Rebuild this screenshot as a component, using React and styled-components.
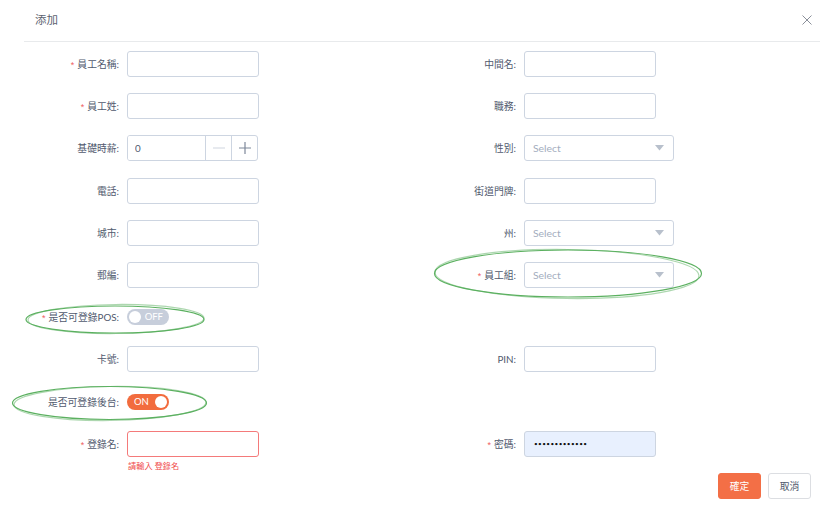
import React from "react";
import styled, { createGlobalStyle } from "styled-components";

const Global = createGlobalStyle`
  html, body { margin: 0; padding: 0; background: #fff; }
  body {
    font-family: Lato, "Noto Sans CJK TC", "Noto Sans CJK SC", sans-serif;
    color: #515a6e;
    overflow: hidden;
  }
  * { box-sizing: border-box; }
`;

const Page = styled.div`
  position: relative;
  width: 820px;
  height: 511px;
  padding-left: 24px;
`;

const Dialog = styled.div`
  width: 796px;
`;

const Header = styled.div`
  height: 42px;
  border-bottom: 1px solid #e8eaec;
  display: flex;
  align-items: center;
  justify-content: space-between;
  padding: 0 6px 0 11px;
`;

const Title = styled.div`
  font-size: 11.5px;
  color: #5c6270;
  line-height: 1;
  margin-top: -2px;
`;

const Close = styled.button`
  border: 0;
  background: none;
  padding: 0;
  width: 14px;
  height: 14px;
  display: flex;
  align-items: center;
  justify-content: center;
  margin-top: -2px;
`;

const Form = styled.div`
  display: grid;
  grid-template-columns: 397px 1fr;
  grid-auto-rows: 26px;
  row-gap: 16.2px;
  padding-top: 9px;
`;

const Item = styled.div`
  display: flex;
  align-items: center;
`;

const Label = styled.label`
  width: 103px;
  flex: none;
  padding-right: 8px;
  text-align: right;
  font-size: 9.8px;
  color: #515a6e;
  white-space: nowrap;
`;

const Star = styled.span`
  color: #f06060;
  font-size: 9px;
  margin-right: 3px;
  font-family: "Liberation Sans", sans-serif;
`;

const Control = styled.div`
  position: relative;
  display: flex;
  align-items: center;
`;

const TextInput = styled.input`
  width: ${(p) => p.$w || 132}px;
  height: 26px;
  border: 1px solid ${(p) => (p.$error ? "#f47a7a" : "#cdd5e1")};
  border-radius: 3px;
  background: ${(p) => (p.$filled ? "#e8f0fe" : "#fff")};
  padding: 0 8px;
  font-size: 9.8px;
  color: #222;
  outline: none;
  font-family: Lato, "Noto Sans CJK TC", sans-serif;
`;

const PasswordInput = styled(TextInput)`
  font-size: 6.4px;
  letter-spacing: 0.4px;
  padding-left: 9px;
  color: #111;
`;

const NumberBox = styled.div`
  width: 131px;
  height: 26px;
  border: 1px solid #cdd5e1;
  border-radius: 3px;
  display: flex;
  overflow: hidden;
`;

const NumberField = styled.input`
  flex: 1;
  min-width: 0;
  border: 0;
  outline: none;
  padding: 0 7px;
  font-size: 9.8px;
  color: #515a6e;
  font-family: Lato, sans-serif;
`;

const StepBtn = styled.div`
  width: 26px;
  flex: none;
  border-left: 1px solid #cdd5e1;
  display: flex;
  align-items: center;
  justify-content: center;
`;

const SelectBox = styled.div`
  width: 150px;
  height: 26px;
  border: 1px solid #cdd5e1;
  border-radius: 3px;
  display: flex;
  align-items: center;
  justify-content: space-between;
  padding: 0 9px 0 8px;
  font-size: 10.4px;
  color: #a3adbe;
`;

const Switch = styled.div`
  width: 42px;
  height: 16px;
  border-radius: 8px;
  background: ${(p) => (p.$on ? "#f26c3e" : "#c7cedb")};
  display: flex;
  align-items: center;
  flex-direction: ${(p) => (p.$on ? "row" : "row-reverse")};
  justify-content: space-between;
  padding-left: ${(p) => (p.$on ? "7px" : "2px")};
  padding-right: ${(p) => (p.$on ? "2px" : "6px")};
`;

const SwitchText = styled.span`
  color: #fff;
  font-size: 9.5px;
  line-height: 1;
  font-family: Lato, sans-serif;
`;

const Knob = styled.span`
  width: 12px;
  height: 12px;
  border-radius: 50%;
  background: #fff;
`;

const ErrorTip = styled.div`
  position: absolute;
  top: 100%;
  left: 1px;
  margin-top: 2px;
  font-size: 8.2px;
  color: #f04b4b;
  white-space: nowrap;
`;

const Footer = styled.div`
  display: flex;
  justify-content: flex-end;
  gap: 7px;
  padding: 16px 9px 0 0;
`;

const Button = styled.button`
  width: 43px;
  height: 26px;
  border-radius: 3px;
  font-size: 9.8px;
  font-family: "Noto Sans CJK TC", sans-serif;
  border: 1px solid ${(p) => (p.$primary ? "#f36f46" : "#dcdee2")};
  background: ${(p) => (p.$primary ? "#f36f46" : "#fff")};
  color: ${(p) => (p.$primary ? "#fff" : "#515a6e")};
  padding: 0;
`;

const Annotations = styled.svg`
  position: absolute;
  left: 0;
  top: 0;
  width: 820px;
  height: 511px;
  pointer-events: none;
`;

const Arrow = () => (
  <svg width="9" height="6" viewBox="0 0 9 6">
    <path d="M0 0 H9 L4.5 5.5 Z" fill="#b8c0cc" />
  </svg>
);

const Field = ({ label, required, children }) => (
  <Item>
    <Label>
      {required && <Star>*</Star>}
      {label}
    </Label>
    <Control>{children}</Control>
  </Item>
);

const Empty = () => <Item />;

export default function App() {
  return (
    <>
      <Global />
      <Page>
        <Dialog>
          <Header>
            <Title>添加</Title>
            <Close aria-label="close">
              <svg width="10" height="10" viewBox="0 0 10 10">
                <path d="M0.5 0.5 L9.5 9.5 M9.5 0.5 L0.5 9.5" stroke="#8a8f99" strokeWidth="1" />
              </svg>
            </Close>
          </Header>
          <Form>
            <Field label="員工名稱:" required><TextInput readOnly /></Field>
            <Field label="中間名:"><TextInput readOnly /></Field>

            <Field label="員工姓:" required><TextInput readOnly /></Field>
            <Field label="職務:"><TextInput readOnly /></Field>

            <Field label="基礎時薪:">
              <NumberBox>
                <NumberField readOnly value="0" />
                <StepBtn>
                  <svg width="12" height="12" viewBox="0 0 12 12">
                    <path d="M0 6 H12" stroke="#cfd6e0" strokeWidth="1.2" />
                  </svg>
                </StepBtn>
                <StepBtn>
                  <svg width="12" height="12" viewBox="0 0 12 12">
                    <path d="M0 6 H12 M6 0 V12" stroke="#7d8799" strokeWidth="1.2" />
                  </svg>
                </StepBtn>
              </NumberBox>
            </Field>
            <Field label="性別:"><SelectBox>Select<Arrow /></SelectBox></Field>

            <Field label="電話:"><TextInput readOnly /></Field>
            <Field label="街道門牌:"><TextInput readOnly /></Field>

            <Field label="城市:"><TextInput readOnly /></Field>
            <Field label="州:"><SelectBox>Select<Arrow /></SelectBox></Field>

            <Field label="郵編:"><TextInput readOnly /></Field>
            <Field label="員工組:" required><SelectBox>Select<Arrow /></SelectBox></Field>

            <Field label="是否可登錄POS:" required>
              <Switch>
                <SwitchText>OFF</SwitchText>
                <Knob />
              </Switch>
            </Field>
            <Empty />

            <Field label="卡號:"><TextInput readOnly /></Field>
            <Field label="PIN:"><TextInput readOnly /></Field>

            <Field label="是否可登錄後台:">
              <Switch $on>
                <SwitchText>ON</SwitchText>
                <Knob />
              </Switch>
            </Field>
            <Empty />

            <Field label="登錄名:" required>
              <TextInput readOnly $error />
              <ErrorTip>請輸入 登錄名</ErrorTip>
            </Field>
            <Field label="密碼:" required>
              <PasswordInput readOnly type="password" value="1234567890123" $filled />
            </Field>
          </Form>
          <Footer>
            <Button $primary>確定</Button>
            <Button>取消</Button>
          </Footer>
        </Dialog>
        <Annotations viewBox="0 0 820 511">
          <g fill="none" stroke="#4aa84f" strokeWidth="1.2" opacity="0.9">
            <ellipse cx="115" cy="319.5" rx="89" ry="13.5" />
            <ellipse cx="116" cy="319" rx="88" ry="14.5" transform="rotate(-0.6 116 319)" opacity="0.5" />
            <ellipse cx="568" cy="273.5" rx="133.5" ry="23.5" />
            <ellipse cx="567" cy="274" rx="132" ry="24.5" transform="rotate(0.8 567 274)" opacity="0.5" />
            <ellipse cx="109.5" cy="403" rx="97" ry="16.5" />
            <ellipse cx="110" cy="403.5" rx="96" ry="17" transform="rotate(-0.7 110 403)" opacity="0.5" />
          </g>
        </Annotations>
      </Page>
    </>
  );
}
